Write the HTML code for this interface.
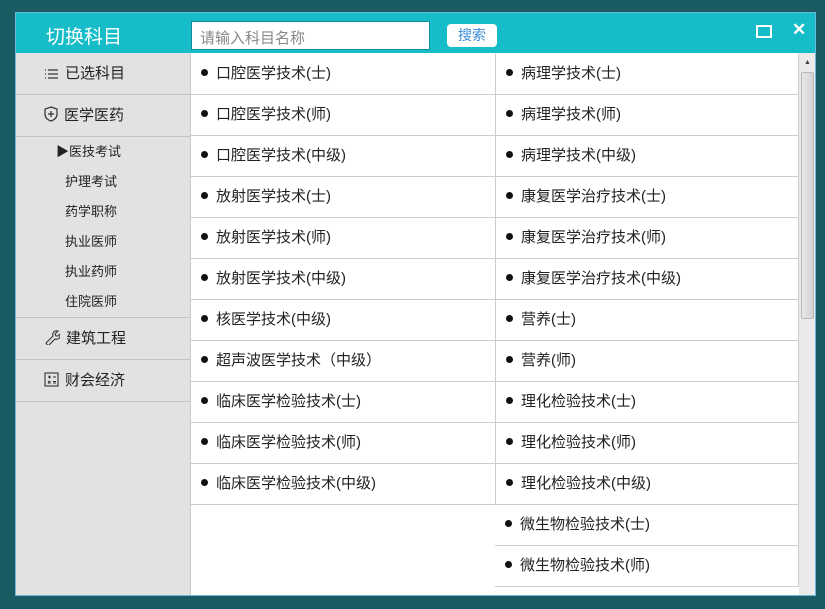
<!DOCTYPE html>
<html><head><meta charset="utf-8"><style>
*{margin:0;padding:0;box-sizing:border-box}
body{width:825px;height:609px;background:#1b5b64;font-family:"Liberation Sans","Microsoft YaHei","Noto Sans CJK SC",sans-serif;position:relative;overflow:hidden}
.dlg{position:absolute;left:15px;top:12px;width:801px;height:584px;background:#fff;border:1px solid #6fb7d6;overflow:hidden}
.hd{position:absolute;left:0;top:0;width:100%;height:40px;background:#16bcc8}
.ttl{position:absolute;left:30px;top:9px;color:#fff;font-size:19px}
.inp{position:absolute;left:175px;top:8px;width:239px;height:29px;background:#fff;border:1px solid #0f8d99;font-size:15px;color:#888;padding:5px 8px}
.btn{position:absolute;left:431px;top:11px;width:50px;height:23px;background:#fff;border-radius:4px;color:#3c8ed6;font-size:14px;text-align:center;line-height:23px}
.max{position:absolute;left:740px;top:12px;width:16px;height:13px;border:2.5px solid #fff}
.cls{position:absolute;left:776px;top:7px;color:#fff;font-size:17px;font-weight:bold}
.side{position:absolute;left:0;top:40px;width:175px;height:545px;background:#e2e2e2;border-right:1px solid #c8c8c8}
.si{height:42px;border-bottom:1px solid #c4c4c4;font-size:15px;color:#222;line-height:42px;padding-left:28px}
.si svg{vertical-align:-2px;margin-right:6px}
.sub{font-size:13px;color:#222;height:30px;line-height:30px;padding-left:49px}
.cell{position:absolute;height:41px;font-size:15px;color:#222;line-height:40px;padding-left:10px}
.cell:before{content:"";display:inline-block;width:7px;height:7px;border-radius:50%;background:#111;margin-right:8px;vertical-align:2px}
.l{left:175px;width:305px;border-bottom:1px solid #ccc}
.r{left:479px;width:304px;border:1px solid #ccc;border-top:none}
.sb{position:absolute;left:783px;top:40px;width:17px;height:545px;background:#eaeaea}
.th{position:absolute;left:2px;top:19px;width:13px;height:247px;background:linear-gradient(90deg,#e8e8e8,#d2d2d2);border:1px solid #b8b8b8;border-radius:2px}
</style></head><body>
<div class="dlg">
<div class="hd"><div class="ttl">切换科目</div><div class="inp">请输入科目名称</div><div class="btn">搜索</div><div class="max"></div><div class="cls">✕</div></div>
<div class="side">
<div class="si"><svg width="15" height="12" viewBox="0 0 15 12" fill="none" stroke="#333" stroke-width="1.2"><path d="M1 2h1M1 6h1M1 10h1M4 2h10M4 6h10M4 10h10"/></svg>已选科目</div>
<div class="si"><svg width="14" height="16" viewBox="0 0 14 16" fill="none" stroke="#333" stroke-width="1.2"><path d="M7 1L13 3v5c0 4-3 6-6 7C4 14 1 12 1 8V3z M7 5v6M4 8h6"/></svg>医学医药</div>
<div style="border-bottom:1px solid #c4c4c4">
<div class="sub" style="padding-left:40px">▶医技考试</div><div class="sub">护理考试</div><div class="sub">药学职称</div><div class="sub">执业医师</div><div class="sub">执业药师</div><div class="sub">住院医师</div>
</div>
<div class="si"><svg width="16" height="16" viewBox="0 0 16 16" fill="none" stroke="#333" stroke-width="1.1"><path d="M2 14l7-7c-1-3 1-6 5-5l-3 3 1 2 2 0 2-2c1 4-2 6-5 5l-7 7z"/></svg>建筑工程</div>
<div class="si"><svg width="15" height="15" viewBox="0 0 15 15" fill="none" stroke="#333" stroke-width="1.1"><rect x="1" y="1" width="13" height="13"/><path d="M4 5h3M5.5 3.5v3M9 5h3M4 9l2.5 2.5M6.5 9L4 11.5M9 9.5h3M9 11h3"/></svg>财会经济</div>
</div>
<div class="cell l" style="top:41px">口腔医学技术(士)</div>
<div class="cell l" style="top:82px">口腔医学技术(师)</div>
<div class="cell l" style="top:123px">口腔医学技术(中级)</div>
<div class="cell l" style="top:164px">放射医学技术(士)</div>
<div class="cell l" style="top:205px">放射医学技术(师)</div>
<div class="cell l" style="top:246px">放射医学技术(中级)</div>
<div class="cell l" style="top:287px">核医学技术(中级)</div>
<div class="cell l" style="top:328px">超声波医学技术（中级）</div>
<div class="cell l" style="top:369px">临床医学检验技术(士)</div>
<div class="cell l" style="top:410px">临床医学检验技术(师)</div>
<div class="cell l" style="top:451px">临床医学检验技术(中级)</div>
<div class="cell r" style="top:41px">病理学技术(士)</div>
<div class="cell r" style="top:82px">病理学技术(师)</div>
<div class="cell r" style="top:123px">病理学技术(中级)</div>
<div class="cell r" style="top:164px">康复医学治疗技术(士)</div>
<div class="cell r" style="top:205px">康复医学治疗技术(师)</div>
<div class="cell r" style="top:246px">康复医学治疗技术(中级)</div>
<div class="cell r" style="top:287px">营养(士)</div>
<div class="cell r" style="top:328px">营养(师)</div>
<div class="cell r" style="top:369px">理化检验技术(士)</div>
<div class="cell r" style="top:410px">理化检验技术(师)</div>
<div class="cell r" style="top:451px">理化检验技术(中级)</div>
<div class="cell r" style="top:492px;border-left:none">微生物检验技术(士)</div>
<div class="cell r" style="top:533px;border-left:none">微生物检验技术(师)</div>
<div class="sb"><div style="position:absolute;left:5px;top:6px;font-size:7px;color:#444">▲</div><div class="th"></div></div>
</div>
</body></html>
